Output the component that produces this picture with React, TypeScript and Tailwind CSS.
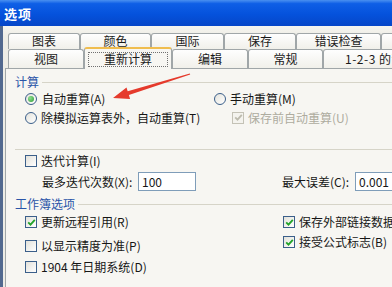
import React from "react";

const font = { fontFamily: '"Noto Sans CJK SC", "Noto Sans", sans-serif' };

function Tab({ w, label, cls = "" }: { w: string; label: string; cls?: string }) {
  return (
    <div
      className={`${w} ${cls} shrink-0 border border-b-0 border-[#a0a6a8] rounded-t-[3px] bg-[linear-gradient(#fefefe,#f1f0ea)] flex items-center justify-center text-[12px] leading-none text-[#1a1a1a]`}
    >
      {label}
    </div>
  );
}

function Radio({ on = false }: { on?: boolean }) {
  return (
    <span className="w-[12px] h-[12px] rounded-full border border-[#3b5f8a] bg-[linear-gradient(135deg,#e4e3dc,#ffffff)] flex items-center justify-center shrink-0">
      {on && <span className="w-[6px] h-[6px] rounded-full bg-[radial-gradient(circle_at_35%_35%,#8fe08f,#2a9a35)]" />}
    </span>
  );
}

function Check({ on = false, disabled = false }: { on?: boolean; disabled?: boolean }) {
  return (
    <span
      className={`w-[12px] h-[12px] border ${disabled ? "border-[#c4c2b6] bg-[#f4f3ee]" : "border-[#3b5f8a] bg-[linear-gradient(135deg,#e2e1da,#ffffff)]"} flex items-center justify-center shrink-0`}
    >
      {on && (
        <svg width="9" height="9" viewBox="0 0 9 9">
          <path d="M1.2 4.3 L3.5 6.6 L7.8 1.8" fill="none" stroke={disabled ? "#bdbbae" : "#22a32a"} strokeWidth="1.8" />
        </svg>
      )}
    </span>
  );
}

export default function App() {
  return (
    <div className="w-[392px] h-[287px] overflow-hidden relative flex flex-col bg-[#eeede6]" style={font}>
      {/* title bar */}
      <div className="h-[26px] shrink-0 flex items-center pl-[4px] bg-[linear-gradient(#4a90f0_0%,#0f5fe6_14%,#0552dc_55%,#0646c8_100%)]">
        <span className="text-white font-bold text-[13px] leading-none tracking-[1px]">选项</span>
      </div>
      <div className="flex-1 flex border-l-[3px] border-[#52698f]">
        <div className="flex-1 flex flex-col pl-[2px] pt-[7px] bg-[linear-gradient(#f6f5f0,#eeede6_10px)]">
          {/* tab row 1 */}
          <div className="flex h-[16px] pl-[3px]">
            <Tab w="w-[72px]" label="图表" cls="pb-[2px]" />
            <Tab w="w-[71px]" label="颜色" cls="pb-[2px]" />
            <Tab w="w-[73px]" label="国际" cls="pb-[2px]" />
            <Tab w="w-[72px]" label="保存" cls="pb-[2px]" />
            <Tab w="w-[85px]" label="错误检查" cls="pb-[2px]" />
            <Tab w="w-[40px]" label="" />
          </div>
          {/* tab row 2 */}
          <div className="flex items-end h-[19px] pl-[3px]">
            <Tab w="w-[76px]" label="视图" cls="h-[19px]" />
            <div className="w-[88px] h-[22px] -mb-px shrink-0 relative z-10 border border-b-0 border-[#a0a6a8] border-t-[2px] border-t-[#f0bd4e] rounded-t-[3px] bg-[#f7f6f2] flex items-center justify-center">
              <span className="border border-dotted border-[#707070] w-[80px] h-[15px] flex items-center justify-center text-[12px] leading-none text-[#1a1a1a]">
                重新计算
              </span>
            </div>
            <Tab w="w-[76px]" label="编辑" cls="h-[19px]" />
            <Tab w="w-[75px]" label="常规" cls="h-[19px]" />
            <div className="w-[100px] h-[19px] shrink-0 border border-b-0 border-[#a0a6a8] rounded-t-[3px] bg-[linear-gradient(#fefefe,#f1f0ea)] flex items-center pl-[21px] text-[12px] leading-none text-[#1a1a1a] whitespace-nowrap tracking-[0.5px]">
              1-2-3 的帮助
            </div>
          </div>
          {/* panel */}
          <div className="flex-1 border border-r-0 border-b-0 border-[#a0a6a8] bg-[#f7f6f2] flex flex-col pl-[9px] text-[12px] leading-none text-[#161616]">
            {/* 计算 */}
            <div className="mt-[5px] h-[16px] flex items-center gap-[3px]">
              <span className="text-[#2a55a8]">计算</span>
              <span className="flex-1 h-px bg-[#d6d4c8]" />
            </div>
            <div className="h-[18px] flex items-center">
              <div className="w-[198px] flex items-center pl-[10px] gap-[5px]">
                <Radio on />
                <span>自动重算(A)</span>
              </div>
              <div className="flex items-center gap-[4px] pl-[1px]">
                <Radio />
                <span>手动重算(M)</span>
              </div>
            </div>
            <div className="h-[19px] flex items-center">
              <div className="w-[217px] flex items-center pl-[10px] gap-[4px]">
                <Radio />
                <span className="whitespace-nowrap">除模拟运算表外，自动重算(T)</span>
              </div>
              <div className="flex items-center gap-[4px]">
                <Check on disabled />
                <span className="text-[#aeac9f]">保存前自动重算(U)</span>
              </div>
            </div>
            <div className="mt-[22px] h-px bg-[#d6d4c8]" />
            <div className="mt-[3px] h-[16px] flex items-center pl-[10px] gap-[4px]">
              <Check />
              <span>迭代计算(I)</span>
            </div>
            <div className="mt-[3px] h-[19px] flex items-center">
              <span className="w-[123px] pl-[27px] whitespace-nowrap">最多迭代次数(X):</span>
              <div className="w-[58px] h-[19px] border border-[#7f9db9] bg-white flex items-center pl-[3px]">100</div>
              <span className="ml-[86px] w-[73px] whitespace-nowrap">最大误差(C):</span>
              <div className="w-[50px] h-[19px] border border-[#7f9db9] bg-white flex items-center pl-[3px]">0.001</div>
            </div>
            {/* 工作簿选项 */}
            <div className="mt-[5px] h-[16px] flex items-center gap-[3px]">
              <span className="text-[#2a55a8] whitespace-nowrap">工作簿选项</span>
              <span className="flex-1 h-px bg-[#d6d4c8]" />
            </div>
            <div className="flex">
              <div className="w-[268px] flex flex-col pl-[10px]">
                <div className="mt-[2px] h-[16px] flex items-center gap-[4px]">
                  <Check on />
                  <span>更新远程引用(R)</span>
                </div>
                <div className="mt-[8px] h-[16px] flex items-center gap-[4px]">
                  <Check />
                  <span>以显示精度为准(P)</span>
                </div>
                <div className="mt-[5px] h-[16px] flex items-center gap-[4px]">
                  <Check />
                  <span>1904 年日期系统(D)</span>
                </div>
              </div>
              <div className="flex flex-col">
                <div className="mt-[2px] h-[16px] flex items-center gap-[4px] whitespace-nowrap">
                  <Check on />
                  <span>保存外部链接数据(X)</span>
                </div>
                <div className="mt-[4px] h-[16px] flex items-center gap-[4px]">
                  <Check on />
                  <span>接受公式标志(B)</span>
                </div>
              </div>
            </div>
          </div>
        </div>
      </div>
      {/* red annotation arrow */}
      <svg className="absolute left-0 top-0 pointer-events-none" width="392" height="287" viewBox="0 0 392 287">
        <polygon
          points="189.8,73.4 190.2,74.6 128.9,95.1 130.1,98.9 113,98 126.5,87.5 127.7,91.3"
          fill="#e53a2c"
        />
      </svg>
    </div>
  );
}
